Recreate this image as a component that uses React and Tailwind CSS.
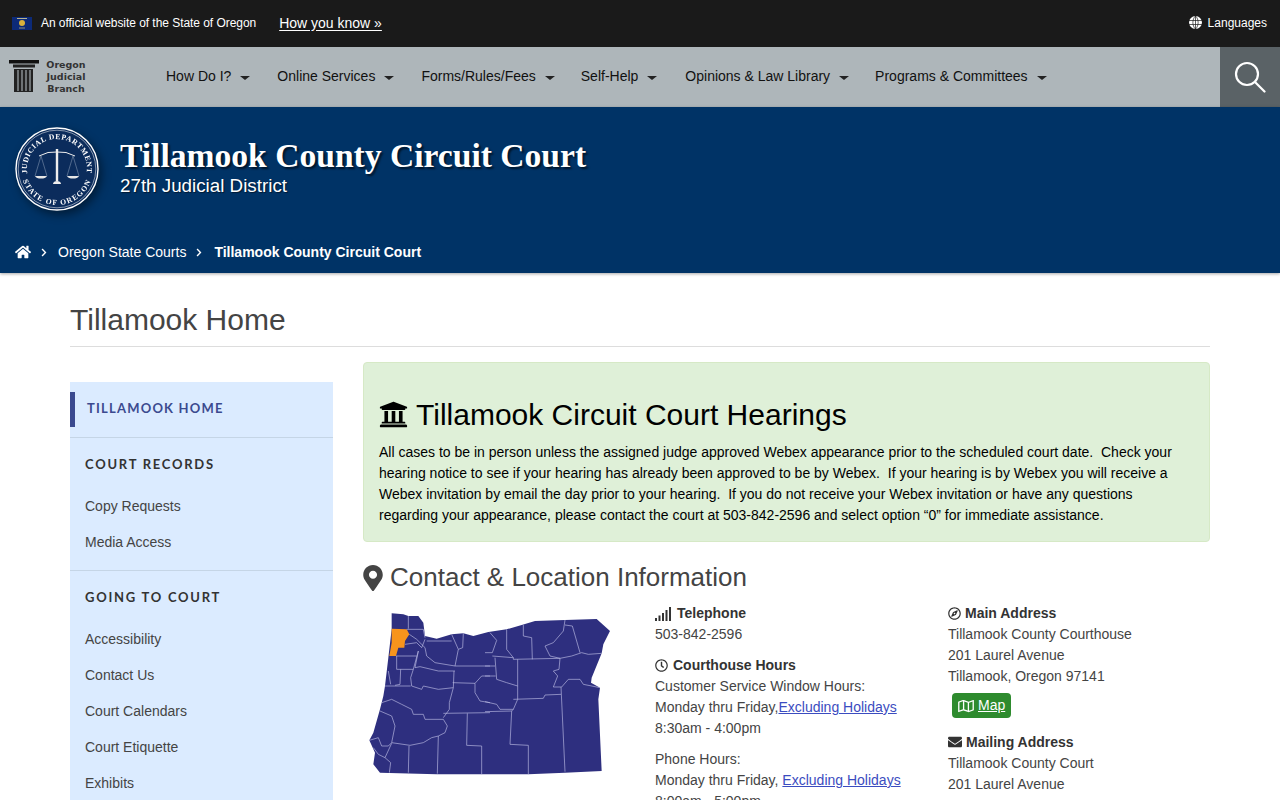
import { FaHome, FaUniversity, FaMapMarkerAlt, FaRegClock, FaRegCompass, FaEnvelope, FaRegMap, FaChevronRight } from 'react-icons/fa'

const navItems = [
  ['How Do I?', 'mr-[46px]'],
  ['Online Services', 'mr-[46px]'],
  ['Forms/Rules/Fees', 'mr-[45px]'],
  ['Self-Help', 'mr-[47px]'],
  ['Opinions & Law Library', 'mr-[45px]'],
  ['Programs & Committees', ''],
]

const courtRecords = ['Copy Requests', 'Media Access']
const goingToCourt = ['Accessibility', 'Contact Us', 'Court Calendars', 'Court Etiquette', 'Exhibits']

function Flag() {
  return (
    <svg width="20" height="13" viewBox="0 0 20 13" className="shrink-0 mt-[2px]">
      <rect width="20" height="13" fill="#0c2a78" />
      <circle cx="10" cy="6" r="3" fill="#d9b13b" />
      <rect x="5" y="1" width="10" height="1" fill="#b9b48a" />
      <rect x="7" y="10.5" width="6" height="1" fill="#8d8f7a" />
    </svg>
  )
}

function Globe() {
  return (
    <svg width="13" height="13" viewBox="0 0 13 13" className="shrink-0">
      <circle cx="6.5" cy="6.5" r="6.5" fill="#fff" />
      <path d="M0 4.5h13M0 8.5h13M6.5 0v13M6.5 0C3 3 3 10 6.5 13M6.5 0C10 3 10 10 6.5 13" stroke="#1a1a1a" strokeWidth=".7" fill="none" />
    </svg>
  )
}

function Pillar() {
  return (
    <svg width="30" height="32" viewBox="0 0 30 32" className="shrink-0 -mt-[2px]">
      <rect x="0" y="0" width="30" height="3.5" fill="#111" />
      <rect x="4" y="4.5" width="22" height="3" fill="#222" />
      <rect x="5" y="9" width="19" height="23" fill="#222" />
      <path d="M9 10v21M13 10v21M17 10v21M21 10v21" stroke="#aeb6ba" strokeWidth="1.1" />
    </svg>
  )
}

function Seal() {
  return (
    <svg width="84" height="84" viewBox="0 0 84 84" className="shrink-0 drop-shadow-[3px_4px_5px_rgba(0,0,0,0.45)]">
      <defs>
        <path id="sealTop" d="M16 57A30 30 0 1 1 68 57" />
        <path id="sealBottom" d="M6 42a36 36 0 0 0 72 0" />
      </defs>
      <circle cx="42" cy="42" r="41" fill="#0b2c5c" stroke="#fff" strokeWidth="1.4" />
      <circle cx="42" cy="42" r="38.8" fill="none" stroke="#fff" strokeWidth=".5" />
      <text fill="#fff" fontSize="7.6" fontWeight="bold" fontFamily="'Liberation Serif', serif" letterSpacing=".6">
        <textPath href="#sealTop" startOffset="50%" textAnchor="middle">JUDICIAL DEPARTMENT</textPath>
      </text>
      <text fill="#fff" fontSize="7.6" fontWeight="bold" fontFamily="'Liberation Serif', serif" letterSpacing="1.2">
        <textPath href="#sealBottom" startOffset="50%" textAnchor="middle">STATE OF OREGON</textPath>
      </text>
      <path d="M24 29Q33 24 42 25Q51 24 60 29" stroke="#eee" strokeWidth="1" fill="none" />
      <path d="M42 22v32" stroke="#eee" strokeWidth="2.4" />
      <path d="M38 57c0-2 2-3 4-3s4 1 4 3z" fill="#eee" />
      <path d="M26 29l-6 20M26 29l6 20M58 29l-6 20M58 29l6 20" stroke="#b9c4d6" strokeWidth=".4" fill="none" />
      <path d="M20 49h12c-1 2-3 2.500-6 2.500s-5-.5-6-2.500zM52 49h12c-1 2-3 2.500-6 2.500s-5-.5-6-2.500z" fill="#e6e6e6" />
    </svg>
  )
}

function SignalIcon() {
  return (
    <svg width="17" height="14" viewBox="0 0 17 14" className="shrink-0" fill="#333">
      <rect x="0" y="11" width="2" height="3" />
      <rect x="3.500" y="8.500" width="2" height="5.500" />
      <rect x="7" y="6" width="2" height="8" />
      <rect x="10.500" y="3" width="2" height="11" />
      <rect x="14" y="0" width="2" height="14" />
    </svg>
  )
}

// traced from the county map, 3 units to the pixel
function OregonMap() {
  return (
    <svg width="270" height="190" viewBox="0 0 810 570" className="block">
      <path
        fill="#2e2f7f"
        d="M110 52L145 55L160 60L190 60L205 80L210 120L245 128L290 115L325 112L355 120L400 108L455 100L500 87L540 75L630 72L725 69L765 105L745 145L740 172L710 245L708 260L735 275L730 310L740 525L630 530L520 535L390 535L245 535L75 530L55 505L60 470L43 433L55 410L75 340L85 300L90 270L100 185L110 100Z"
      />
      <path fill="#f7941d" d="M110 98L155 100L163 115L150 135L148 155L130 155L123 180L103 180L110 140Z" />
      <g fill="none" stroke="#b9bae2" strokeWidth="2" strokeLinejoin="round">
        <g transform="translate(15,30)">
          <path d="M145 30L145 68M140 70L190 70L195 95M148 85L170 100L195 125M135 115L170 110L185 125L195 100" />
          <path d="M108 150L170 150M110 150L110 190L160 190L175 135" />
          <path d="M195 125L200 150L225 170L285 180L295 130L275 85M200 105L275 105M310 82L308 125L295 130" />
          <path d="M175 135L165 185L180 182L235 195L285 195" />
          <path d="M160 190L152 215L155 240L185 250L190 240L235 250L280 245" />
          <path d="M285 180L390 180M282 195L280 245L268 290L268 310L250 335M278 230L345 232" />
          <path d="M345 232L345 260L360 285L390 290M345 232L365 210L390 210" />
          <path d="M75 240L152 240M122 190L120 235L105 238M85 195L92 235" />
          <path d="M65 290L95 280L125 295L155 310L160 325L190 325L195 340L250 340L262 360L255 380L235 390L215 395L190 410L150 418L95 410" />
          <path d="M250 322L390 320M322 322L320 418L365 420L365 505M235 390L232 503M147 420L145 500" />
          <path d="M60 315L95 330L105 360L95 410L85 420L65 420L55 395L28 403M95 412L75 455L92 470L88 500M40 425L55 445L75 455" />
        </g>
        <g transform="translate(390,45)">
          <path d="M15 65L35 88L22 125L0 125M22 135L85 140M65 55L65 115L85 140L85 145M115 42L115 75L140 80L142 145M85 145L225 142" />
          <path d="M240 27L235 60L205 95L180 105L195 135L225 142L260 135L290 125L310 130L350 127M240 42L262 45L285 125" />
          <path d="M225 142L222 175L205 180L218 195L205 228L230 228L250 205L285 205L295 220L345 230" />
          <path d="M98 145L98 225M30 140L35 205L65 215L98 225M0 165L30 165M0 195L32 195" />
          <path d="M98 225L98 265L85 295L45 295L35 280L0 272M85 295L80 300L0 302M85 265L175 262L180 252L228 250" />
          <path d="M228 228L240 482M80 300L75 400L130 403L130 490" />
        </g>
      </g>
    </svg>
  )
}

function App() {
  return (
    <div className="font-['Liberation_Sans',Arial,sans-serif] text-sm text-[#333] bg-white h-[800px] overflow-hidden">
      <div className="h-[47px] bg-[#1a1a1a] flex items-center pl-3 pr-[13px] pb-[2px] text-white">
        <Flag />
        <span className="ml-[9px] text-xs tracking-[-0.05px]">An official website of the State of Oregon</span>
        <a href="#" className="ml-[23px] text-sm underline underline-offset-2">How you know »</a>
        <div className="ml-auto flex items-center gap-[6px] text-xs">
          <Globe />
          <span>Languages</span>
        </div>
      </div>

      <nav className="h-[60px] bg-[#aeb6ba] flex items-center pl-[9px]">
        <Pillar />
        <div className="w-[50px] ml-[2px] text-center text-[9.5px] font-bold leading-[12px] text-[#333] font-['DejaVu_Sans',sans-serif]">
          <div>Oregon</div>
          <div>Judicial</div>
          <div>Branch</div>
        </div>
        <ul className="flex ml-[75px] pb-[2px] text-sm text-[#111]">
          {navItems.map(([label, cls]) => (
            <li key={label} className={`relative ${cls}`}>
              {label}
              <span className="absolute right-[-19px] top-[10px] w-0 h-0 border-x-[5px] border-x-transparent border-t-[4px] border-t-[#222]" />
            </li>
          ))}
        </ul>
        <div className="ml-auto w-[60px] h-[60px] bg-[#5a6266] flex items-center justify-center">
          <svg width="32" height="32" viewBox="0 0 32 32" fill="none" stroke="#fff" strokeWidth="2.2">
            <circle cx="13" cy="13" r="11" />
            <path d="M21 21l9.500 9.500" strokeLinecap="round" />
          </svg>
        </div>
      </nav>

      <header className="h-[166px] bg-[#003366] shadow-[0_1px_3px_rgba(0,0,0,0.35)] relative px-[15px] pt-[20px] text-white">
        <div className="flex">
          <Seal />
          <div className="ml-[21px] pt-[10px]">
            <div className="font-['Liberation_Serif',serif] font-bold text-[33.6px] leading-[38px] [text-shadow:2px_2px_2px_rgba(0,0,0,0.6)]">
              Tillamook County Circuit Court
            </div>
            <div className="text-[18.8px] leading-[22px] [text-shadow:1px_1px_1px_rgba(0,0,0,0.5)]">27th Judicial District</div>
          </div>
        </div>
        <div className="flex items-center mt-[31px] text-sm">
          <FaHome className="w-4 h-4" />
          <FaChevronRight className="w-[8px] h-[9px] ml-[9px] mr-[10px]" />
          <span>Oregon State Courts</span>
          <FaChevronRight className="w-[8px] h-[9px] ml-[9px] mr-[11px]" />
          <span className="font-bold">Tillamook County Circuit Court</span>
        </div>
      </header>

      <div className="mx-[70px]">
        <h1 className="text-[30px] leading-[33px] text-[#444] pt-[30px] pb-[10px] border-b border-[#ddd]">Tillamook Home</h1>

        <div className="flex gap-[30px] mt-[15px]">
          <aside className="w-[263px] mt-[20px] bg-[#dbebff] shrink-0">
            <div className="pt-[10px] pb-[10px] border-b border-[#c5d5e6]">
              <div className="border-l-[5px] border-[#3b4a8f] pl-3 pb-[2px] h-[35px] flex items-center font-['Lato',sans-serif] font-bold text-[13px] tracking-[1.2px] text-[#3b4a8f]">
                TILLAMOOK HOME
              </div>
            </div>
            <div className="px-[15px] pt-[16px] pb-[10px] border-b border-[#c5d5e6]">
              <div className="font-['Lato',sans-serif] font-bold text-[13px] tracking-[1.75px] text-[#333] leading-[20px] mb-[14px]">COURT RECORDS</div>
              {courtRecords.map((item) => (
                <div key={item} className="h-[36px] flex items-center text-[#444]">{item}</div>
              ))}
            </div>
            <div className="px-[15px] pt-[16px]">
              <div className="font-['Lato',sans-serif] font-bold text-[13px] tracking-[1.75px] text-[#333] leading-[20px] mb-[14px]">GOING TO COURT</div>
              {goingToCourt.map((item) => (
                <div key={item} className="h-[36px] flex items-center text-[#444]">{item}</div>
              ))}
            </div>
          </aside>

          <main className="flex-1 min-w-0">
            <div className="bg-[#dff0d8] border border-[#d6e9c6] rounded px-[15px] pt-[35px] pb-[15px] text-black leading-[21px]">
              <h2 className="flex items-center text-[30px] leading-[33px] mb-[11px]">
                <FaUniversity className="w-[29px] h-[29px] mr-[8px]" />
                Tillamook Circuit Court Hearings
              </h2>
              <p className="whitespace-pre-wrap">
                All cases to be in person unless the assigned judge approved Webex appearance prior to the scheduled court date.  Check your hearing notice to see if your hearing has already been approved to be by Webex.  If your hearing is by Webex you will receive a Webex invitation by email the day prior to your hearing.  If you do not receive your Webex invitation or have any questions regarding your appearance, please contact the court at 503-842-2596 and select option “0” for immediate assistance.
              </p>
            </div>

            <h2 className="flex items-center text-[26px] leading-[29px] text-[#444] mt-[21px]">
              <FaMapMarkerAlt className="w-[20px] h-[26px] mr-[7px]" />
              Contact &amp; Location Information
            </h2>

            <div className="grid grid-cols-[292px_293px_1fr] mt-[11px] leading-[21px] text-[#444]">
              <div className="-mt-[7px] -ml-[8px]"><OregonMap /></div>
              <div>
                <div className="flex items-center gap-[5px] font-bold text-[#333]"><SignalIcon />Telephone</div>
                <div>503-842-2596</div>
                <div className="flex items-center gap-[5px] font-bold text-[#333] mt-[10px]"><FaRegClock className="w-[13px] h-[13px]" />Courthouse Hours</div>
                <div>Customer Service Window Hours:</div>
                <div>Monday thru Friday,<a href="#" className="text-[#3b4cc0] underline">Excluding Holidays</a></div>
                <div>8:30am - 4:00pm</div>
                <div className="mt-[10px]">Phone Hours:</div>
                <div>Monday thru Friday, <a href="#" className="text-[#3b4cc0] underline">Excluding Holidays</a></div>
                <div>8:00am - 5:00pm</div>
              </div>
              <div>
                <div className="flex items-center gap-[4px] font-bold text-[#333]"><FaRegCompass className="w-[13px] h-[13px]" />Main Address</div>
                <div>Tillamook County Courthouse</div>
                <div>201 Laurel Avenue</div>
                <div>Tillamook, Oregon 97141</div>
                <a href="#" className="ml-1 mt-[6px] inline-flex items-center gap-[4px] h-[25px] px-[6px] rounded bg-[#2e8b2e] text-white underline">
                  <FaRegMap className="w-[16px] h-[14px]" />Map
                </a>
                <div className="flex items-center gap-[4px] font-bold text-[#333] mt-[13px]"><FaEnvelope className="w-[14px] h-[14px]" />Mailing Address</div>
                <div>Tillamook County Court</div>
                <div>201 Laurel Avenue</div>
              </div>
            </div>
          </main>
        </div>
      </div>
    </div>
  )
}

export default App
